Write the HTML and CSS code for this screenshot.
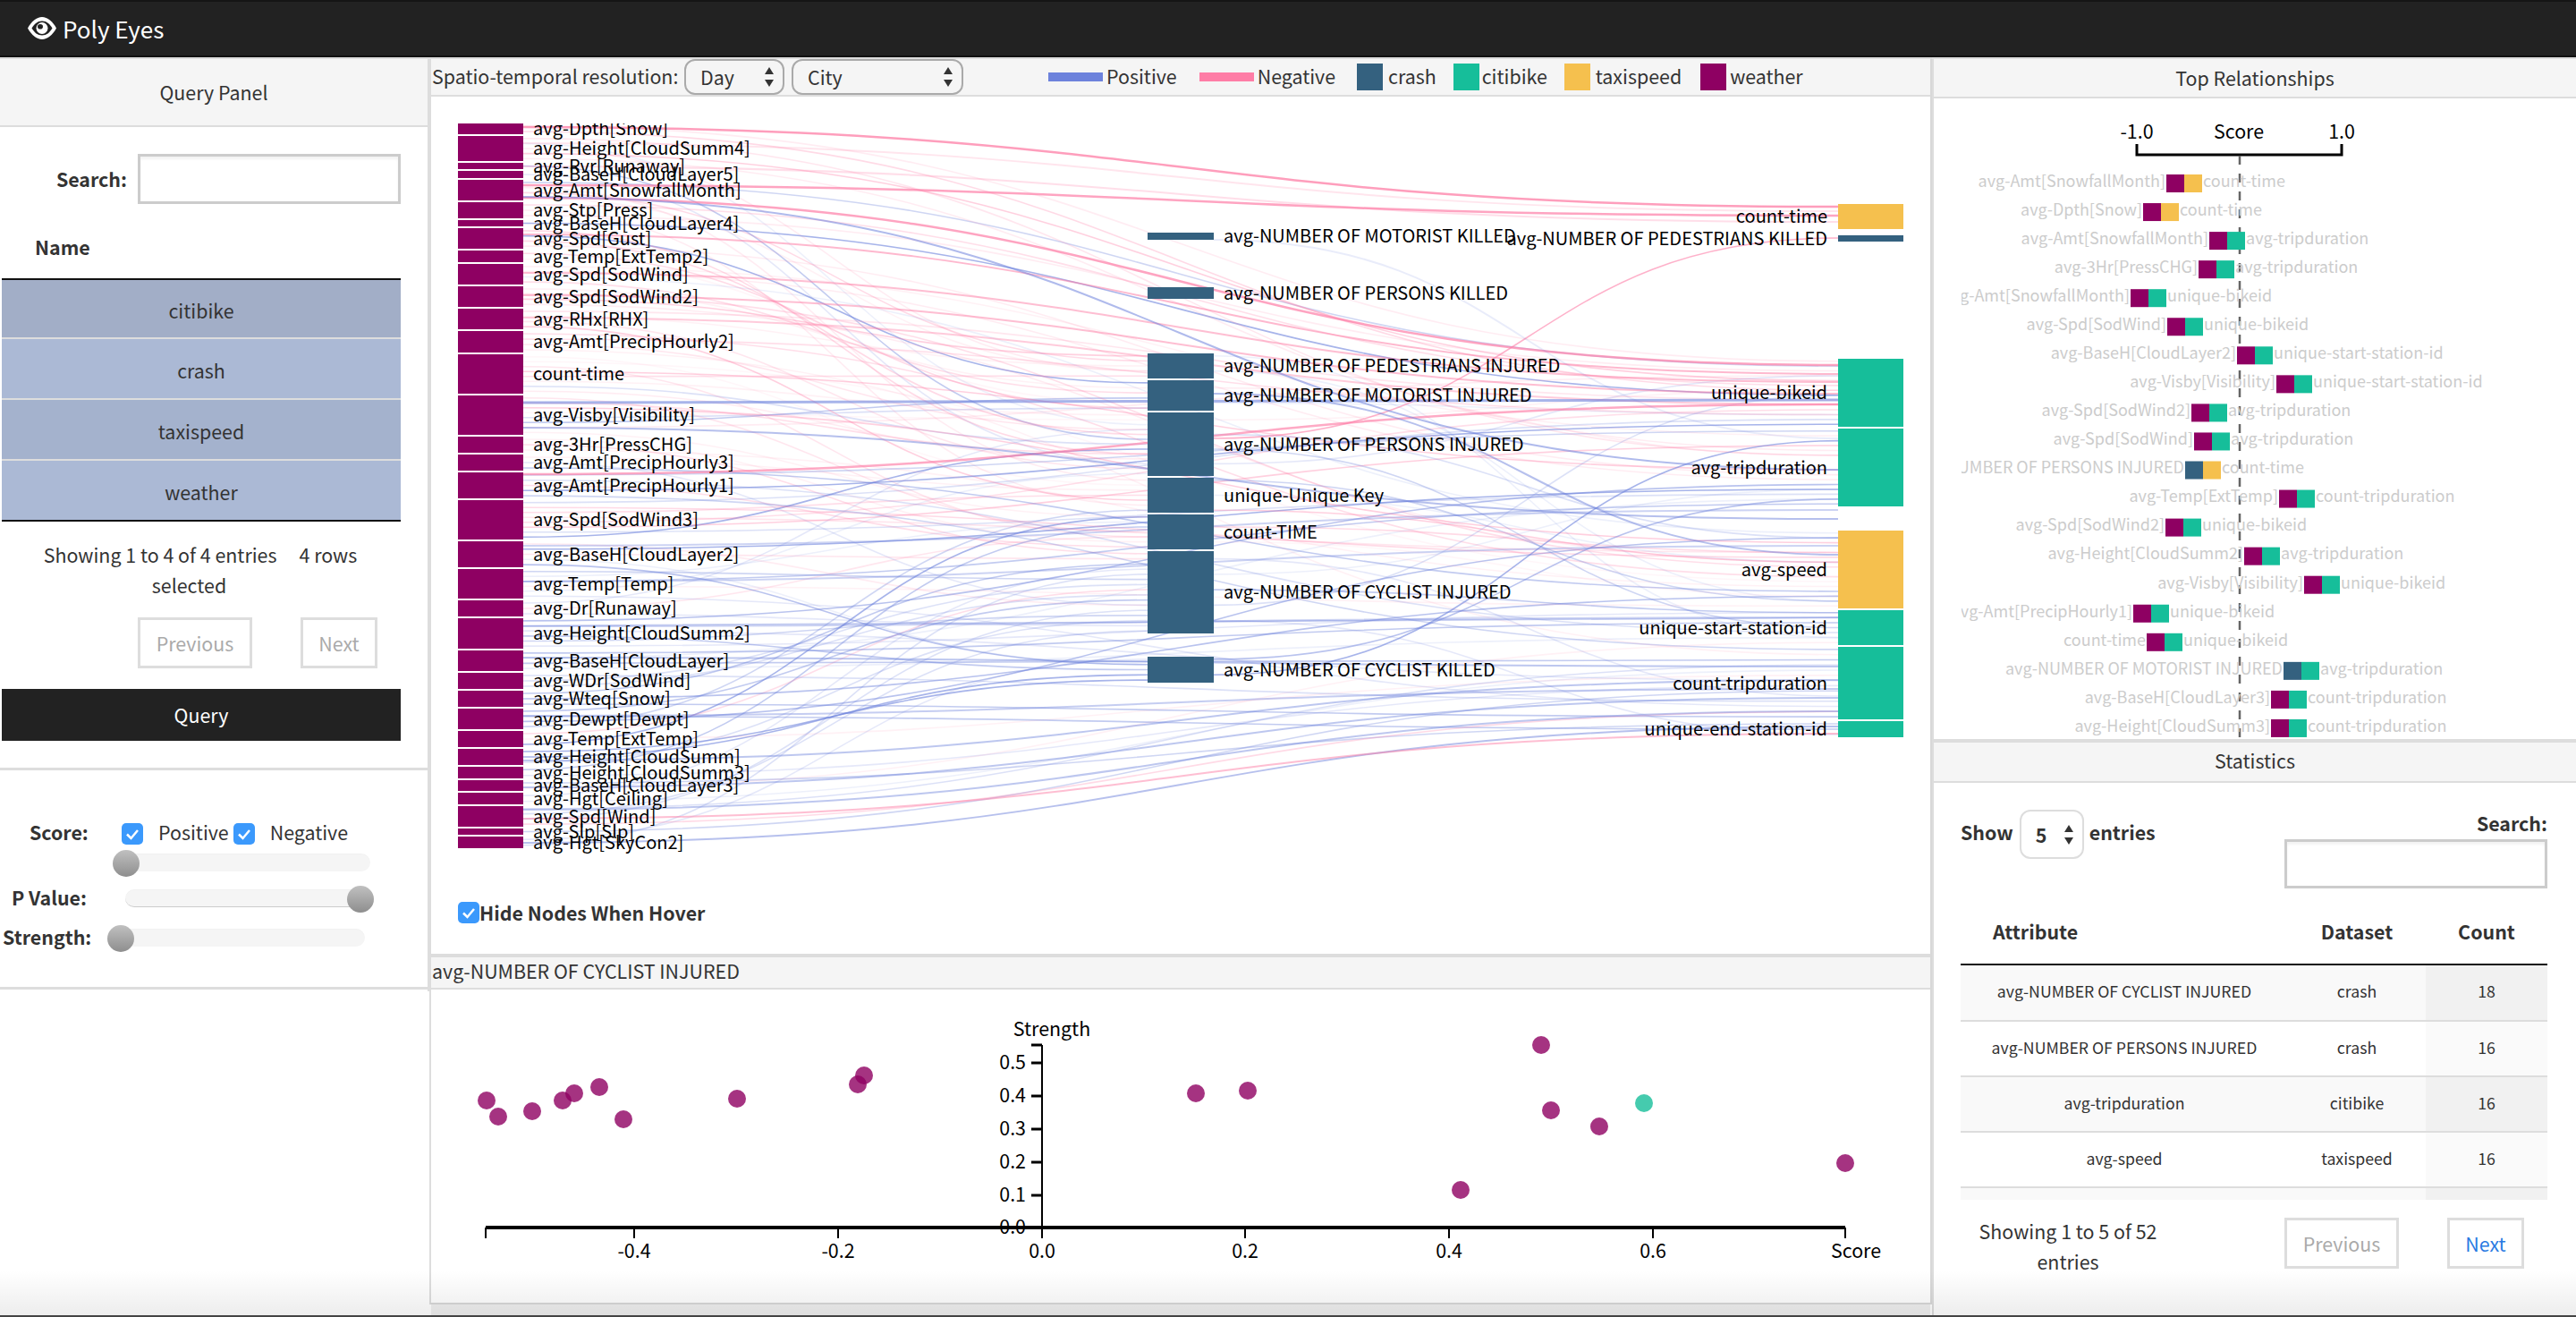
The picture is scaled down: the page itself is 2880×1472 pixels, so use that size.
FILE: index.html
```html
<!DOCTYPE html>
<html lang="en">

<head>
    <meta charset="UTF-8">
    <meta name="viewport" content="width=device-width, initial-scale=1.0">
    <title>Poly Eyes</title>
    <link rel="stylesheet" href="styles.css">
</head>

<body>
    <nav class="navbar">
        <svg class="eye-icon" viewBox="0 0 32 25">
            <path class="eye-white" d="M0 12.5C4 5 10 0 16 0s12 5 16 12.5C28 20 22 25 16 25S4 20 0 12.5z" />
            <path class="eye-dark" d="M4.500 12.500C7.500 7.500 11 4.500 16 4.500s8.500 3 11.500 8C24.500 17.500 21 20.500 16 20.500s-8.500-3-11.500-8z" />
            <circle class="eye-white" cx="16" cy="12.500" r="6.500" />
            <ellipse class="eye-pupil" cx="14" cy="10.800" rx="3" ry="2.800" />
        </svg>
        <span class="brand">Poly Eyes</span>
    </nav>

    <div class="main">
        <aside class="left-col">
            <div class="panel-heading query-heading">Query Panel</div>
            <div class="query-search">
                <label>Search:</label>
                <input type="text">
            </div>
            <table class="dataset-table">
                <thead>
                    <tr><th>Name</th></tr>
                </thead>
                <tbody>
                    <tr class="row-a"><td>citibike</td></tr>
                    <tr class="row-b"><td>crash</td></tr>
                    <tr class="row-c"><td>taxispeed</td></tr>
                    <tr class="row-b"><td>weather</td></tr>
                </tbody>
            </table>
            <div class="query-info">
                <div>Showing 1 to 4 of 4 entries<span class="select-item">4 rows</span></div>
                <div class="select-rest">selected</div>
            </div>
            <div class="query-pager">
                <a class="page-btn prev-btn">Previous</a>
                <a class="page-btn next-btn">Next</a>
            </div>
            <button class="query-btn">Query</button>

            <div class="filters">
                <div class="score-row">
                    <label class="filter-label score-label">Score:</label>
                    <span class="checkbox"><svg viewBox="0 0 24 24"><path d="M6 12.500l4.500 4.500L18 8" /></svg></span>
                    <span class="check-text">Positive</span>
                    <span class="checkbox"><svg viewBox="0 0 24 24"><path d="M6 12.500l4.500 4.500L18 8" /></svg></span>
                    <span class="check-text">Negative</span>
                </div>
                <div class="slider slider-score"><span class="handle handle-left"></span></div>
                <div class="filter-row pvalue-row">
                    <label class="filter-label pvalue-label">P Value:</label>
                    <div class="slider slider-pvalue"><span class="handle handle-right"></span></div>
                </div>
                <div class="filter-row strength-row">
                    <label class="filter-label strength-label">Strength:</label>
                    <div class="slider slider-strength"><span class="handle handle-start"></span></div>
                </div>
            </div>
        </aside>

        <section class="center-col">
            <div class="toolbar">
                <span class="res-label">Spatio-temporal resolution:</span>
                <div class="select select-day">Day
                    <svg class="updown" viewBox="0 0 12 24"><path d="M6 1l5 8H1zM6 23L1 15h10z" /></svg>
                </div>
                <div class="select select-city">City
                    <svg class="updown" viewBox="0 0 12 24"><path d="M6 1l5 8H1zM6 23L1 15h10z" /></svg>
                </div>
                <div class="legend">
                    <span class="swatch-line line-pos"></span><span class="legend-text text-pos">Positive</span>
                    <span class="swatch-line line-neg"></span><span class="legend-text text-neg">Negative</span>
                    <span class="swatch swatch-crash"></span><span class="legend-text text-crash">crash</span>
                    <span class="swatch swatch-citibike"></span><span class="legend-text text-citibike">citibike</span>
                    <span class="swatch swatch-taxi"></span><span class="legend-text text-taxi">taxispeed</span>
                    <span class="swatch swatch-weather"></span><span class="legend-text">weather</span>
                </div>
            </div>
            <div class="sankey-body">
                <svg id="sankey" class="sankey" viewBox="512 138 1640 860"></svg>
                <div class="hide-nodes">
                    <span class="checkbox"><svg viewBox="0 0 24 24"><path d="M6 12.500l4.500 4.500L18 8" /></svg></span>
                    <strong>Hide Nodes When Hover</strong>
                </div>
            </div>
            <div class="detail-heading">avg-NUMBER OF CYCLIST INJURED</div>
            <div class="detail-body">
                <svg id="scatter" class="scatter" viewBox="482 1106 1676 350"></svg>
            </div>
        </section>

        <aside class="right-col">
            <div class="panel-heading top-heading">Top Relationships</div>
            <div class="top-body">
                <svg id="relations" class="relations" viewBox="2193 110 685 716"></svg>
            </div>
            <div class="panel-heading stats-heading">Statistics</div>
            <div class="stats-body">
                <div class="stats-controls">
                    <div class="show-entries">
                        <strong>Show</strong>
                        <div class="select select-entries">5
                            <svg class="updown" viewBox="0 0 12 24"><path d="M6 1l5 8H1zM6 23L1 15h10z" /></svg>
                        </div>
                        <strong>entries</strong>
                    </div>
                    <div class="stats-search">
                        <label>Search:</label>
                        <input type="text">
                    </div>
                </div>
                <table class="stats-head">
                    <tr>
                        <th class="col-attr attr-head">Attribute</th>
                        <th class="col-set">Dataset</th>
                        <th class="col-count">Count</th>
                    </tr>
                </table>
                <div class="stats-scroll">
                    <table class="stats-table">
                        <tr class="odd"><td class="col-attr">avg-NUMBER OF CYCLIST INJURED</td><td class="col-set">crash</td><td class="col-count">18</td></tr>
                        <tr><td class="col-attr">avg-NUMBER OF PERSONS INJURED</td><td class="col-set">crash</td><td class="col-count">16</td></tr>
                        <tr class="odd"><td class="col-attr">avg-tripduration</td><td class="col-set">citibike</td><td class="col-count">16</td></tr>
                        <tr><td class="col-attr">avg-speed</td><td class="col-set">taxispeed</td><td class="col-count">16</td></tr>
                        <tr class="odd"><td class="col-attr">&nbsp;</td><td class="col-set"></td><td class="col-count"></td></tr>
                    </table>
                </div>
                <div class="stats-footer">
                    <div class="stats-info">Showing 1 to 5 of 52 entries</div>
                    <a class="page-btn stats-prev">Previous</a>
                    <a class="page-btn stats-next">Next</a>
                </div>
            </div>
        </aside>
    </div>

    <div class="bottom-shade"></div>

    <script src="charts.js"></script>
</body>

</html>
```

FILE: styles.css
```css
* {
    box-sizing: border-box;
}

html,
body {
    margin: 0;
    padding: 0;
    width: 2880px;
    height: 1472px;
    overflow: hidden;
}

body {
    font-family: "Noto Sans CJK SC", "Liberation Sans", sans-serif;
    font-size: 21.4px;
    line-height: 34px;
    color: #333;
    background-color: #fff;
    position: relative;
}

label,
strong,
th {
    font-weight: 700;
}

input {
    border: 3px solid #ccc;
    background-color: #fff;
    box-shadow: inset 0 3px 3px rgba(0, 0, 0, 0.05);
    outline: none;
}

/* navbar */
.navbar {
    height: 64px;
    background-color: #222;
    border-top: 2px solid #151515;
    border-bottom: 2px solid #111;
    display: flex;
    align-items: center;
    padding-left: 31px;
    color: #fff;
}

.eye-icon {
    width: 32px;
    height: 25px;
    margin-right: 7px;
    margin-top: -2px;
}

.eye-white {
    fill: #fff;
}

.eye-dark,
.eye-pupil {
    fill: #222;
}

.brand {
    font-size: 26px;
}

.main {
    display: flex;
    height: 1408px;
    background: linear-gradient(#efefef, #efefef) no-repeat 482px 100% / 1676px 14px;
}

.panel-heading {
    background-color: #f5f5f5;
    border-top: 2px solid #ddd;
    border-bottom: 2px solid #ddd;
    text-align: center;
}

/* left column */
.left-col {
    width: 480px;
    flex: none;
    background: linear-gradient(#ddd, #ddd) no-repeat 478px 0 / 2px 1044px;
}

.query-heading {
    height: 78px;
    line-height: 74px;
    border-right: 2px solid #ddd;
}

.left-col > *:not(.filters):not(.panel-heading) {
    margin-right: 32px;
}

.query-search {
    display: flex;
    justify-content: flex-end;
    align-items: center;
    gap: 12px;
    margin-top: 30px;
    height: 56px;
}

.query-search input {
    width: 294px;
    height: 56px;
}

.dataset-table {
    width: 446px;
    margin-left: 2px;
    border-collapse: collapse;
    margin-top: 26px;
    text-align: center;
}

.dataset-table th {
    text-align: left;
    height: 58px;
    padding: 0 0 14px 37px;
    border-bottom: 2px solid #111;
}

.dataset-table td {
    height: 68px;
    padding: 3px 0 0;
    border-top: 2px solid #ddd;
}

.dataset-table tbody tr:first-child td {
    border-top: none;
    height: 66px;
}

.dataset-table tbody {
    border-bottom: 2px solid #111;
}

.row-a {
    background-color: #a2aec7;
}

.row-b {
    background-color: #abb9d5;
}

.row-c {
    background-color: #a4b2cd;
}

.query-info {
    margin-top: 20px;
    text-align: center;
    width: 448px;
}

.select-item {
    margin-left: 25px;
}

.select-rest {
    padding-right: 25px;
}

.page-btn {
    display: inline-flex;
    align-items: center;
    justify-content: center;
    border: 3px solid #ddd;
    color: #aaa;
    background-color: #fff;
}

.query-pager {
    display: flex;
    margin-top: 19px;
    padding-left: 154px;
    height: 57px;
}

.prev-btn {
    width: 128px;
}

.next-btn {
    width: 86px;
    margin-left: 54px;
}

.query-btn {
    display: block;
    width: 446px;
    height: 58px;
    margin: 23px 0 0 2px;
    background-color: #222;
    color: #fff;
    border: none;
    font: inherit;
}

.filters {
    height: 248px;
    margin-top: 30px;
    padding-top: 59px;
    border-top: 3px solid #ddd;
    border-bottom: 3px solid #ddd;
    border-right: 2px solid #ddd;
}

.score-row {
    display: flex;
    align-items: center;
    height: 24px;
    padding-left: 33px;
}

.score-row label,
.check-text {
    position: relative;
    top: -2px;
}

.filter-label {
    color: #333;
}

.score-label {
    width: 103px;
}

.checkbox {
    width: 24px;
    height: 24px;
    flex: none;
    background-color: #3b99fc;
    border-radius: 5px;
    display: inline-block;
}

.checkbox svg {
    display: block;
    width: 24px;
    height: 24px;
    fill: none;
    stroke: #fff;
    stroke-width: 2.5;
}

.check-text {
    margin: 0 5px 0 17px;
}

.slider {
    position: relative;
    height: 20px;
    background-color: #f5f5f5;
    border-radius: 10px;
    box-shadow: inset 0 1px 1px rgba(0, 0, 0, 0.02);
}

.handle {
    position: absolute;
    width: 30px;
    height: 30px;
    top: -4px;
    border-radius: 50%;
    background: linear-gradient(#c0c0c0, #8e8e8e);
}

.handle-left {
    left: -14px;
}

.handle-right {
    right: 0;
}

.handle-start {
    left: 0;
}

.slider-score {
    width: 274px;
    margin: 10px 0 0 140px;
}

.filter-row {
    display: flex;
    align-items: center;
}

.pvalue-row {
    height: 20px;
    margin-top: 20px;
    padding-left: 13px;
}

.pvalue-label {
    width: 127px;
    margin-top: -2px;
}

.slider-pvalue {
    width: 278px;
    border-bottom: 1px solid #ccc;
}

.strength-row {
    height: 20px;
    margin-top: 24px;
    padding-left: 3px;
}

.strength-label {
    width: 117px;
    margin-top: -2px;
}

.slider-strength {
    width: 288px;
}

/* center column */
.center-col {
    width: 1680px;
    flex: none;
    height: 1394px;
    display: flex;
    flex-direction: column;
    border-left: 2px solid #ddd;
    border-right: 2px solid #d8d8d8;
    border-bottom: 2px solid #d8d8d8;
}

.toolbar {
    height: 44px;
    background-color: #f5f5f5;
    border-top: 2px solid #ddd;
    border-bottom: 2px solid #ddd;
    display: flex;
    align-items: center;
    padding-left: 1px;
    flex: none;
}

.res-label,
.legend-text {
    position: relative;
    top: -1px;
}

.res-label {
    width: 282px;
    white-space: nowrap;
}

.select {
    display: flex;
    align-items: center;
    justify-content: space-between;
    border: 2px solid #aaa;
    border-radius: 12px;
    padding: 0 9px 0 16px;
    height: 40px;
}

.select-day {
    width: 112px;
}

.select-city {
    width: 192px;
    margin-left: 8px;
}

.updown {
    width: 12px;
    height: 24px;
    fill: #333;
}

.legend {
    display: flex;
    align-items: center;
    margin-left: 95px;
}

.swatch-line {
    width: 61px;
    height: 10px;
}

.line-pos {
    background-color: #6d82dc;
}

.line-neg {
    background-color: #fe7da6;
}

.swatch {
    width: 29px;
    height: 30px;
}

.swatch-crash {
    background-color: #34617f;
}

.swatch-citibike {
    background-color: #16be9a;
}

.swatch-taxi {
    background-color: #f5c04e;
}

.swatch-weather {
    background-color: #8e0062;
}

.legend-text {
    margin-left: 4px;
}

.text-pos {
    margin-right: 25px;
}

.text-neg {
    margin-right: 24px;
}

.text-crash {
    margin: 0 19px 0 6px;
}

.text-citibike {
    margin: 0 19px 0 3px;
}

.text-taxi {
    margin: 0 21px 0 6px;
}

.sankey-body {
    height: 958px;
    flex: none;
    padding: 30px 0 0 30px;
}

.sankey {
    display: block;
    width: 1640px;
    height: 860px;
    overflow: hidden;
}

.hide-nodes {
    display: flex;
    align-items: center;
    height: 24px;
    margin-top: 10px;
}

.detail-heading {
    height: 40px;
    flex: none;
    background-color: #f5f5f5;
    border-top: 4px solid #ddd;
    border-bottom: 2px solid #ddd;
    line-height: 30px;
    padding-left: 1px;
}

.detail-body {
    flex: 1;
    background-color: #fff;
}

.scatter {
    display: block;
    width: 1676px;
    height: 350px;
}

/* svg parts */
.link {
    fill: none;
}

.link-pos {
    stroke: #6d82dc;
}

.link-neg {
    stroke: #fe7da6;
}

.node-weather {
    fill: #8e0062;
}

.node-crash {
    fill: #34617f;
}

.node-citibike {
    fill: #16be9a;
}

.node-taxi {
    fill: #f5c04e;
}

.chart-label {
    font-size: 20px;
    fill: #000;
}

.axis-label {
    font-size: 21.4px;
    fill: #000;
}

.rel-label {
    font-size: 18px;
    fill: #ccc;
}

.axis {
    stroke: #000;
    fill: none;
}

.score-dash {
    stroke: #666;
    stroke-width: 2.5;
    stroke-dasharray: 10 10;
}

.dot-weather {
    fill: #8e0062;
    opacity: 0.8;
}

.dot-citibike {
    fill: #16be9a;
    opacity: 0.8;
}

/* right column */
.right-col {
    flex: 1;
    border-left: 2px solid #ddd;
}

.top-heading {
    height: 46px;
    line-height: 42px;
}

.top-body {
    height: 716px;
    padding-left: 31px;
}

.relations {
    display: block;
    width: 685px;
    height: 716px;
}

.stats-heading {
    height: 49px;
    border-top-width: 4px;
    line-height: 40px;
}

.stats-body {
    padding: 30px 32px 0 30px;
}

.stats-controls {
    display: flex;
    justify-content: space-between;
    height: 105px;
}

.show-entries {
    display: flex;
    align-items: center;
    height: 55px;
    gap: 6px;
}

.show-entries strong {
    margin-top: -5px;
}

.select-entries {
    width: 72px;
    height: 55px;
    margin-left: 1px;
    border-color: #ddd;
    border-radius: 12px;
    padding-left: 16px;
    font-weight: 700;
}

.stats-search {
    display: flex;
    flex-direction: column;
    align-items: flex-end;
    margin-top: -2px;
}

.stats-search label {
    height: 35px;
}

.stats-search input {
    width: 294px;
    height: 55px;
}

.stats-head,
.stats-table {
    width: 656px;
    border-collapse: collapse;
    table-layout: fixed;
    text-align: center;
}

.stats-head th {
    height: 68px;
    padding: 0 0 6px;
    border-bottom: 2px solid #111;
}

.stats-head .attr-head {
    text-align: left;
    padding-left: 36px;
}

.col-attr {
    width: 366px;
}

.col-set {
    width: 154px;
}

.col-count {
    width: 136px;
}

.stats-scroll {
    height: 262px;
    overflow: hidden;
}

.stats-table td {
    height: 62px;
    padding: 0 0 5px;
    font-size: 17.7px;
    border-bottom: 2px solid #ddd;
}

.stats-table .odd {
    background-color: #f9f9f9;
}

.stats-table .col-count {
    background-color: #fafafa;
}

.stats-table .odd .col-count {
    background-color: #f1f1f1;
}

.stats-footer {
    display: flex;
    margin-top: 20px;
    height: 57px;
}

.stats-info {
    width: 240px;
    margin: -2px 122px 0 0;
    text-align: center;
}

.stats-prev {
    width: 128px;
}

.stats-next {
    width: 86px;
    margin-left: 54px;
    color: #2a7ae2;
}

/* the window fades at the lower edge */
.bottom-shade {
    position: absolute;
    left: 0;
    right: 0;
    bottom: 0;
    height: 52px;
    background: linear-gradient(rgba(0, 0, 0, 0), rgba(0, 0, 0, 0.07) 96%, #444 96%);
}
```

FILE: charts.js
```js
const SVG_NS = "http://www.w3.org/2000/svg";

// nodes: label, top, bottom
const leftNodes = [
    ["avg-Dpth[Snow]", 138, 150], ["avg-Height[CloudSumm4]", 152, 180], ["avg-Rvr[Runaway]", 182, 189],
    ["avg-BaseH[CloudLayer5]", 191, 199], ["avg-Amt[SnowfallMonth]", 201, 224], ["avg-Stp[Press]", 226, 244],
    ["avg-BaseH[CloudLayer4]", 246, 253], ["avg-Spd[Gust]", 255, 278], ["avg-Temp[ExtTemp2]", 280, 293],
    ["avg-Spd[SodWind]", 295, 318], ["avg-Spd[SodWind2]", 320, 343], ["avg-RHx[RHX]", 345, 368],
    ["avg-Amt[PrecipHourly2]", 370, 394], ["count-time", 396, 440], ["avg-Visby[Visibility]", 442, 486],
    ["avg-3Hr[PressCHG]", 488, 506], ["avg-Amt[PrecipHourly3]", 508, 526], ["avg-Amt[PrecipHourly1]", 528, 557],
    ["avg-Spd[SodWind3]", 559, 603], ["avg-BaseH[CloudLayer2]", 605, 634], ["avg-Temp[Temp]", 636, 669],
    ["avg-Dr[Runaway]", 671, 689], ["avg-Height[CloudSumm2]", 691, 725], ["avg-BaseH[CloudLayer]", 727, 750],
    ["avg-WDr[SodWind]", 752, 770], ["avg-Wteq[Snow]", 772, 790], ["avg-Dewpt[Dewpt]", 792, 815],
    ["avg-Temp[ExtTemp]", 817, 835], ["avg-Height[CloudSumm]", 837, 855], ["avg-Height[CloudSumm3]", 857, 870],
    ["avg-BaseH[CloudLayer3]", 872, 884], ["avg-Hgt[Ceiling]", 886, 899], ["avg-Spd[Wind]", 901, 924],
    ["avg-Slp[Slp]", 926, 933], ["avg-Hgt[SkyCon2]", 935, 948]
];

const midNodes = [
    ["avg-NUMBER OF MOTORIST KILLED", 260, 268], ["avg-NUMBER OF PERSONS KILLED", 321, 334],
    ["avg-NUMBER OF PEDESTRIANS INJURED", 395, 423], ["avg-NUMBER OF MOTORIST INJURED", 425, 459],
    ["avg-NUMBER OF PERSONS INJURED", 461, 532], ["unique-Unique Key", 534, 573], ["count-TIME", 575, 614],
    ["avg-NUMBER OF CYCLIST INJURED", 616, 708], ["avg-NUMBER OF CYCLIST KILLED", 734, 763]
];

const rightNodes = [
    ["count-time", 228, 256, "taxi"], ["avg-NUMBER OF PEDESTRIANS KILLED", 263, 270, "crash"],
    ["unique-bikeid", 401, 477, "citibike"], ["avg-tripduration", 479, 566, "citibike"],
    ["avg-speed", 593, 680, "taxi"], ["unique-start-station-id", 682, 721, "citibike"],
    ["count-tripduration", 723, 804, "citibike"], ["unique-end-station-id", 806, 824, "citibike"]
];

// x0, y0, x1, y1, sign, width, opacity
const mainLinks = [
    [585, 142, 2055, 231, "neg", 2.5, 0.75], [585, 160, 2055, 236, "neg", 2, 0.2],
    [585, 207, 2055, 241, "neg", 2.5, 0.7], [585, 186, 2055, 248, "neg", 2, 0.25],
    [585, 221, 2055, 408, "neg", 2.5, 0.7], [585, 262, 2055, 418, "neg", 2, 0.55],
    [585, 305, 2055, 427, "neg", 2, 0.5], [585, 330, 2055, 440, "neg", 2, 0.5],
    [585, 355, 2055, 452, "neg", 2, 0.4], [585, 530, 2055, 452, "neg", 2.5, 0.65],
    [1357, 490, 2055, 266, "neg", 1.5, 0.6], [585, 450, 2055, 447, "pos", 3, 0.6],
    [585, 220, 2055, 525, "pos", 2, 0.55], [1357, 268, 2055, 490, "pos", 2, 0.15],
    [585, 478, 2055, 580, "pos", 2, 0.5], [585, 942, 2055, 812, "pos", 2, 0.5],
    [585, 915, 2055, 820, "neg", 2, 0.5], [1357, 440, 2055, 620, "pos", 2, 0.5],
    [585, 850, 2055, 760, "pos", 2, 0.45], [585, 880, 2055, 780, "pos", 2, 0.45],
    [585, 905, 2055, 795, "pos", 2, 0.45], [585, 735, 2055, 745, "pos", 2, 0.45],
    [585, 800, 2055, 770, "pos", 2, 0.4], [585, 700, 2055, 690, "pos", 2, 0.35],
    [585, 650, 2055, 610, "pos", 2, 0.35], [585, 610, 2055, 570, "pos", 2, 0.35]
];

// the scatter below the diagram: x, y
const scatterDots = [
    [544, 1230], [557, 1248], [595, 1242], [629, 1230], [642, 1222], [670, 1215], [697, 1251], [824, 1228],
    [959, 1212], [966, 1202], [1337, 1222], [1395, 1219], [1633, 1330], [1723, 1168], [1734, 1241], [1788, 1259],
    [2063, 1300]
];

// bar start x, left label, right label, colour of first and second half
const relations = [
    [2422, "avg-Amt[SnowfallMonth]", "count-time", "weather", "taxi"],
    [2396, "avg-Dpth[Snow]", "count-time", "weather", "taxi"],
    [2470, "avg-Amt[SnowfallMonth]", "avg-tripduration", "weather", "citibike"],
    [2458, "avg-3Hr[PressCHG]", "avg-tripduration", "weather", "citibike"],
    [2382, "avg-Amt[SnowfallMonth]", "unique-bikeid", "weather", "citibike"],
    [2423, "avg-Spd[SodWind]", "unique-bikeid", "weather", "citibike"],
    [2501, "avg-BaseH[CloudLayer2]", "unique-start-station-id", "weather", "citibike"],
    [2545, "avg-Visby[Visibility]", "unique-start-station-id", "weather", "citibike"],
    [2450, "avg-Spd[SodWind2]", "avg-tripduration", "weather", "citibike"],
    [2453, "avg-Spd[SodWind]", "avg-tripduration", "weather", "citibike"],
    [2443, "avg-NUMBER OF PERSONS INJURED", "count-time", "crash", "taxi"],
    [2548, "avg-Temp[ExtTemp]", "count-tripduration", "weather", "citibike"],
    [2421, "avg-Spd[SodWind2]", "unique-bikeid", "weather", "citibike"],
    [2509, "avg-Height[CloudSumm2]", "avg-tripduration", "weather", "citibike"],
    [2576, "avg-Visby[Visibility]", "unique-bikeid", "weather", "citibike"],
    [2385, "avg-Amt[PrecipHourly1]", "unique-bikeid", "weather", "citibike"],
    [2400, "count-time", "unique-bikeid", "weather", "citibike"],
    [2553, "avg-NUMBER OF MOTORIST INJURED", "avg-tripduration", "crash", "citibike"],
    [2539, "avg-BaseH[CloudLayer3]", "count-tripduration", "weather", "citibike"],
    [2539, "avg-Height[CloudSumm3]", "count-tripduration", "weather", "citibike"]
];

function el(parent, name, attrs, text) {
    const node = document.createElementNS(SVG_NS, name);
    for (const key in attrs) {
        node.setAttribute(key, attrs[key]);
    }
    if (text) {
        node.textContent = text;
    }
    parent.appendChild(node);
    return node;
}

// small fixed generator so the thin links come out the same every time
let seed = 4711;
function rnd() {
    seed = (seed * 16807) % 2147483647;
    return seed / 2147483647;
}

function slots(nodes, x) {
    const list = [];
    nodes.forEach(n => {
        const count = Math.max(1, Math.round((n[2] - n[1] - 1.5) / 5.5));
        for (let k = 0; k < count; k++) {
            list.push({ x: x, y: n[1] + (k + 0.5) * (n[2] - n[1]) / count });
        }
    });
    return list;
}

function drawLink(svg, x0, y0, x1, y1, sign, width, opacity) {
    const xm = (x0 + x1) / 2;
    el(svg, "path", {
        class: "link link-" + sign,
        d: `M${x0},${y0}C${xm},${y0} ${xm},${y1} ${x1},${y1}`,
        "stroke-width": width,
        "stroke-opacity": opacity
    });
}

function thinLinks(svg) {
    const left = slots(leftNodes, 585);
    const midIn = slots(midNodes.slice(2), 1283);
    const midOut = slots(midNodes.slice(2), 1357);
    const right = slots(rightNodes.slice(2), 2055);
    const levels = [0.08, 0.12, 0.16, 0.22, 0.28, 0.32, 0.4];

    left.forEach(s => { s.key = s.y + (rnd() - 0.5) * 520; s.r = rnd(); });
    midIn.forEach(s => { s.key = s.y + (rnd() - 0.5) * 120; });
    right.forEach(s => { s.key = s.y + (rnd() - 0.5) * 120; });

    const toMid = left.filter(s => s.r < 0.5).sort((a, b) => a.key - b.key);
    const toRight = left.filter(s => s.r >= 0.5).sort((a, b) => a.key - b.key);
    midIn.sort((a, b) => a.key - b.key);
    right.sort((a, b) => a.key - b.key);

    const pick = y => (rnd() < (y < 400 ? 0.85 : y < 620 ? 0.55 : 0.15) ? "neg" : "pos");
    const level = sign => levels[Math.floor(rnd() * levels.length)] * (sign === "pos" ? 1.5 : 0.9);

    function link(s, t, sign) {
        drawLink(svg, s.x, s.y, t.x, t.y, sign, 1.6, level(sign));
    }

    toMid.forEach((s, i) => link(s, midIn[Math.floor(i * midIn.length / toMid.length)], pick(s.y)));
    toRight.forEach((s, i) => link(s, right[Math.floor(i * right.length / toRight.length)], pick(s.y)));
    midOut.forEach((s, i) => {
        if (i % 3 === 0) {
            link(s, right[Math.floor(rnd() * right.length)], rnd() < 0.4 ? "neg" : "pos");
        }
    });
}

function drawNodes(svg, nodes, x, width, kind, labelX, anchor) {
    nodes.forEach(n => {
        el(svg, "rect", { class: "node-" + (n[3] || kind), x: x, y: n[1], width: width, height: n[2] - n[1] });
    });
    nodes.forEach(n => {
        el(svg, "text", {
            class: "chart-label",
            x: labelX,
            y: (n[1] + n[2]) / 2,
            dy: "0.35em",
            "text-anchor": anchor
        }, n[0]);
    });
}

function drawSankey() {
    const svg = document.getElementById("sankey");
    thinLinks(svg);
    mainLinks.forEach(l => drawLink(svg, l[0], l[1], l[2], l[3], l[4], l[5], l[6]));
    drawNodes(svg, leftNodes, 512, 73, "weather", 596, "start");
    drawNodes(svg, midNodes, 1283, 74, "crash", 1368, "start");
    drawNodes(svg, rightNodes, 2055, 73, "citibike", 2043, "end");
}

function drawScatter() {
    const svg = document.getElementById("scatter");
    el(svg, "path", { class: "axis", "stroke-width": 4, d: "M543,1372H2063" });
    el(svg, "path", { class: "axis", "stroke-width": 2, d: "M543,1372V1384M709,1372V1384M937,1372V1384M1165,1372V1384M1392,1372V1384M1620,1372V1384M1848,1372V1384M2063,1372V1384M1165,1168V1372" });
    el(svg, "path", { class: "axis", "stroke-width": 3, d: "M1153,1168H1165M1153,1188H1165M1153,1225H1165M1153,1262H1165M1153,1299H1165M1153,1336H1165" });

    [["-0.4", 709], ["-0.2", 937], ["0.0", 1165], ["0.2", 1392], ["0.4", 1620], ["0.6", 1848], ["Score", 2075]].forEach(t => {
        el(svg, "text", { class: "axis-label", x: t[1], y: 1399, dy: "0.35em", "text-anchor": "middle" }, t[0]);
    });
    [["0.5", 1188], ["0.4", 1225], ["0.3", 1262], ["0.2", 1299], ["0.1", 1336], ["0.0", 1372]].forEach(t => {
        el(svg, "text", { class: "axis-label", x: 1147, y: t[1], dy: "0.35em", "text-anchor": "end" }, t[0]);
    });
    el(svg, "text", { class: "axis-label", x: 1176, y: 1151, dy: "0.35em", "text-anchor": "middle" }, "Strength");

    scatterDots.forEach(d => el(svg, "circle", { class: "dot-weather", cx: d[0], cy: d[1], r: 10 }));
    el(svg, "circle", { class: "dot-citibike", cx: 1838, cy: 1233, r: 10 });
}

function drawRelations() {
    const svg = document.getElementById("relations");
    el(svg, "path", { class: "axis", "stroke-width": 3, d: "M2389,161V173H2618V161" });
    [["-1.0", 2389], ["Score", 2503], ["1.0", 2618]].forEach(t => {
        el(svg, "text", { class: "axis-label", x: t[1], y: 148, dy: "0.35em", "text-anchor": "middle" }, t[0]);
    });
    el(svg, "path", { class: "score-dash", d: "M2504,174V826" });

    relations.forEach((r, i) => {
        const top = 195 + i * 32.05;
        el(svg, "text", { class: "rel-label", x: r[0] - 1, y: top + 7.5, dy: "0.35em", "text-anchor": "end" }, r[1]);
        el(svg, "text", { class: "rel-label", x: r[0] + 41, y: top + 7.5, dy: "0.35em" }, r[2]);
        el(svg, "rect", { class: "node-" + r[3], x: r[0], y: top, width: 20, height: 20 });
        el(svg, "rect", { class: "node-" + r[4], x: r[0] + 20, y: top, width: 20, height: 20 });
    });
}

document.addEventListener("DOMContentLoaded", function() {
    drawSankey();
    drawScatter();
    drawRelations();
});
```
